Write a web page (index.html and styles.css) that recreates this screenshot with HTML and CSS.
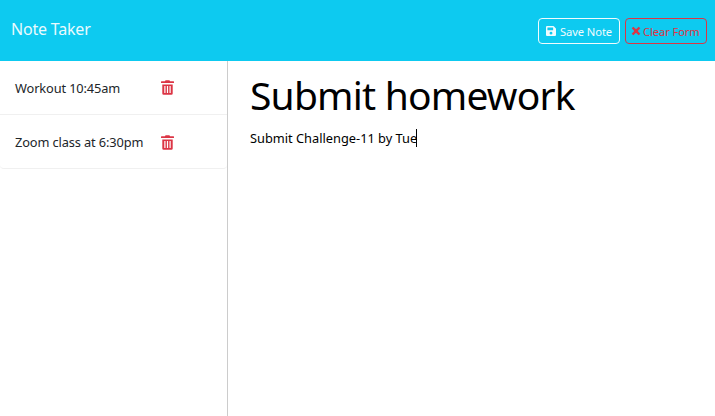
FILE: index.html
```html
<!DOCTYPE html>
<html lang="en">
<head>
<meta charset="utf-8">
<title>Note Taker</title>
<link rel="stylesheet" href="styles.css">
</head>
<body>
<svg width="0" height="0" class="defs">
  <symbol id="trash" viewBox="0 0 13 15"><path fill-rule="evenodd" d="M1.300 4.500h10.400v9a1.300 1.300 0 0 1-1.300 1.300H2.600a1.300 1.300 0 0 1-1.300-1.300zM3.300 6v7h1.200V6zM5.900 6v7h1.200V6zM8.500 6v7h1.200V6zM.4 1.300h3.500L4.600 .3h3.800l.7 1h3.500q.4 0 .4.400v1.400H0V1.700q0-.4.4-.4z"/></symbol>
</svg>
<header class="navbar">
  <a class="brand">Note Taker</a>
  <div class="actions">
    <button class="btn save"><svg class="icon-save" viewBox="0 0 448 448"><path fill-rule="evenodd" d="M433.900 97.900l-83.900-83.900A48 48 0 0 0 316.100 0H48A48 48 0 0 0 0 48v352a48 48 0 0 0 48 48h352a48 48 0 0 0 48-48V131.900a48 48 0 0 0-14.100-34zM224 384a64 64 0 1 1 0-128 64 64 0 0 1 0 128zM320 79.500V180a12 12 0 0 1-12 12H76a12 12 0 0 1-12-12V76a12 12 0 0 1 12-12h228.500a12 12 0 0 1 8.500 3.500l3.500 3.500a12 12 0 0 1 3.500 8.500z"/></svg><span>Save Note</span></button>
    <button class="btn clear"><svg class="icon-x" viewBox="0 0 12 12"><path d="M2.800 .8L6 4 9.200 .8 11.200 2.800 8 6l3.200 3.200-2 2L6 8l-3.200 3.200-2-2L4 6 .8 2.800z"/></svg><span>Clear Form</span></button>
  </div>
</header>
<main class="layout">
  <aside class="sidebar">
    <ul class="notes">
      <li class="note"><span class="note-title">Workout 10:45am</span><svg class="trash"><use href="#trash"/></svg></li>
      <li class="note"><span class="note-title">Zoom class at 6:30pm</span><svg class="trash"><use href="#trash"/></svg></li>
    </ul>
  </aside>
  <section class="editor">
    <h1 class="title">Submit homework</h1>
    <p class="text"><span>Submit Challenge-11 by Tue</span><i class="caret"></i></p>
  </section>
</main>
</body>
</html>
```
FILE: styles.css
```css
* { box-sizing: border-box; }
body { margin: 0; height: 416px; overflow: hidden; display: flex; flex-direction: column; background: #fff; color: #212529; font-family: "Segoe UI", "Noto Sans", sans-serif; }
.defs { position: absolute; }
.navbar { height: 61px; flex: none; display: flex; justify-content: space-between; padding: 0 8px 0 11px; background: #0dcaf0; }
.brand { color: #e9fafe; font-size: 16px; letter-spacing: -0.2px; line-height: 24px; margin-top: 17px; }
.actions { display: flex; gap: 5px; margin-top: 18px; }
.btn { height: 26px; display: flex; align-items: center; padding: 0; border: 1px solid; border-radius: 4px; background: none; font: 11.200px/16px "Segoe UI", "Noto Sans", sans-serif; letter-spacing: -0.1px; white-space: nowrap; }
.btn span { padding-top: 1px; }
.save { width: 82px; color: #f0fbfe; padding-left: 7px; }
.clear { width: 82px; color: #dc3545; padding-left: 5px; }
.icon-save { width: 10px; height: 10px; margin-right: 4px; fill: currentColor; }
.icon-x { width: 10px; height: 10px; margin-right: 2px; fill: currentColor; }
.layout { flex: 1; display: flex; }
.sidebar { width: 228px; border-right: 1px solid #ccc; }
.notes { list-style: none; margin: 0; padding: 0; border-bottom: 1px solid #f0f0f0; border-radius: 0 0 4px 4px; }
.note { height: 54px; display: flex; align-items: center; padding-left: 15px; }
.note:first-child { height: 53px; }
.note + .note { height: 54px; padding-top: 1px; border-top: 1px solid #f0f0f0; }
.note-title { width: 146px; font-size: 12.800px; letter-spacing: -0.120px; line-height: 20px; white-space: nowrap; }
.trash { width: 13px; height: 15px; fill: #dc3545; }
.editor { flex: 1; padding: 7px 0 0 22px; color: #000; }
.title { margin: 0; font-size: 39px; font-weight: 400; letter-spacing: -0.8px; line-height: 53px; white-space: nowrap; }
.text { margin: 7px 0 0; display: flex; align-items: center; font-size: 12.800px; line-height: 20px; white-space: nowrap; }
.caret { width: 1px; height: 18px; margin-left: -1px; background: #000; }
```
